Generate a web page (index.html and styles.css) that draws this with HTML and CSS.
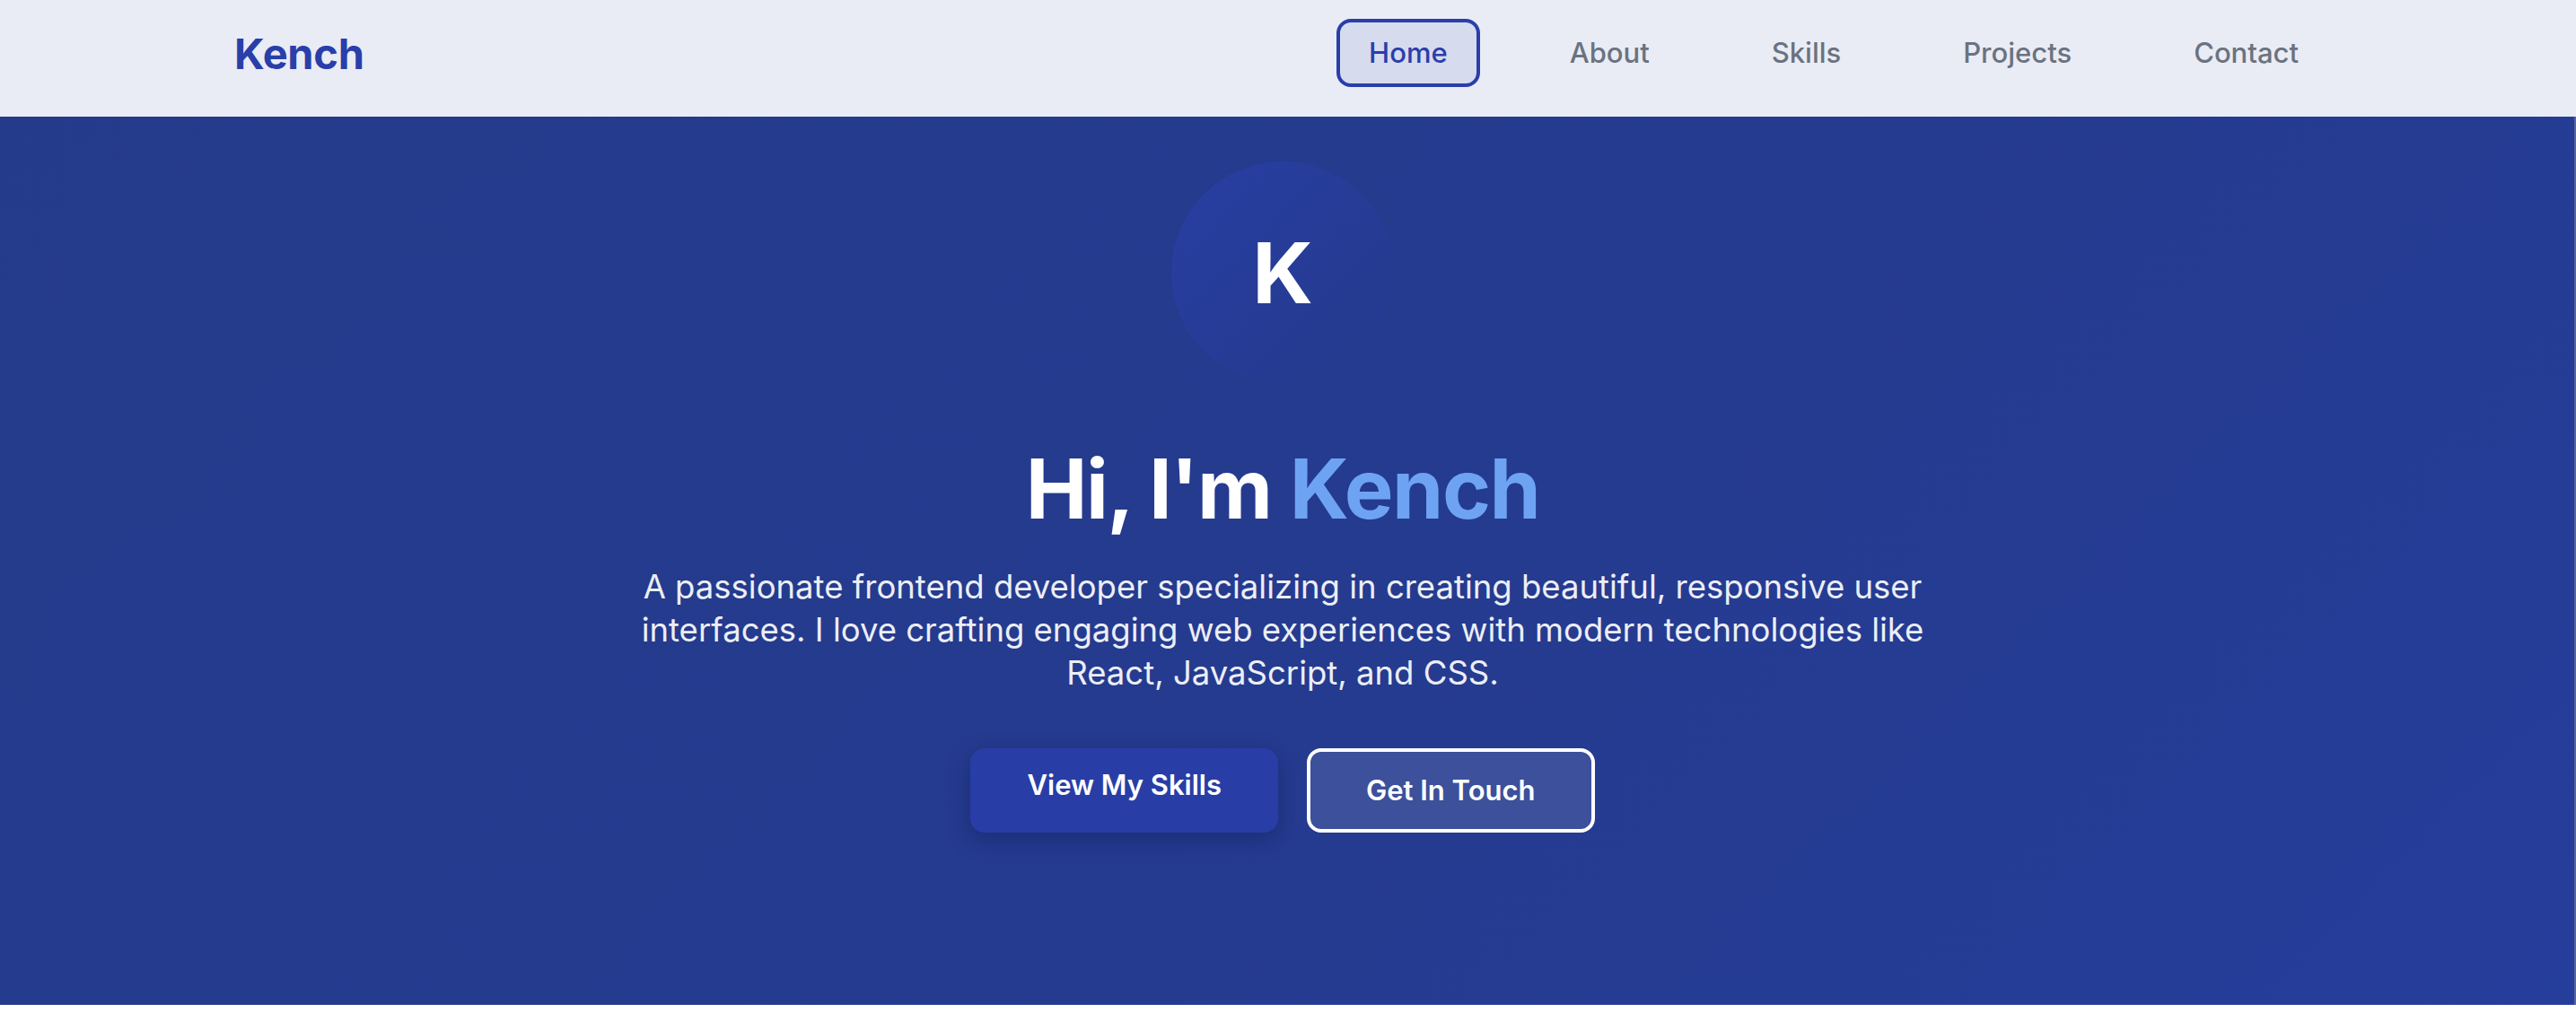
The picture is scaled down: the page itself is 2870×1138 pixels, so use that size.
FILE: index.html
```html
<!DOCTYPE html>
<html lang="en">
<head>
<meta charset="utf-8">
<title>Kench</title>
<link rel="stylesheet" href="styles.css">
</head>
<body>
  <header class="navbar">
    <div class="nav-inner">
      <a class="logo" href="#">Kench</a>
      <nav class="nav-links">
        <a class="nav-link active" href="#">Home</a>
        <a class="nav-link" href="#">About</a>
        <a class="nav-link" href="#">Skills</a>
        <a class="nav-link" href="#">Projects</a>
        <a class="nav-link" href="#">Contact</a>
      </nav>
    </div>
  </header>
  <section class="hero">
    <div class="hero-inner">
      <div class="avatar"><span>K</span></div>
      <h1 class="hero-title">Hi, I'm <span class="accent">Kench</span></h1>
      <p class="hero-text">A passionate frontend developer specializing in creating beautiful, responsive user interfaces. I love crafting engaging web experiences with modern technologies like React, JavaScript, and CSS.</p>
      <div class="hero-buttons">
        <a class="btn btn-primary" href="#">View My Skills</a>
        <a class="btn btn-outline" href="#">Get In Touch</a>
      </div>
    </div>
  </section>
</body>
</html>
```

FILE: styles.css
```css
* {
  box-sizing: border-box;
}

html, body {
  margin: 0;
  padding: 0;
  background: #ffffff;
}

body {
  font-family: Inter, "Noto Sans", "Liberation Sans", sans-serif;
  -webkit-font-smoothing: antialiased;
}

a {
  text-decoration: none;
}

.navbar {
  height: 130px;
  background: #e9ecf5;
  display: flex;
  align-items: center;
  padding-right: 12px;
  padding-bottom: 12px;
}

.nav-inner {
  width: 2336px;
  margin: 0 auto;
  display: flex;
  align-items: center;
  justify-content: space-between;
}

.logo {
  font-size: 47px;
  font-weight: 700;
  color: #2a3eaa;
  letter-spacing: -0.3px;
}

.nav-links {
  display: flex;
  align-items: center;
  gap: 64px;
}

.nav-link {
  font-size: 31px;
  font-weight: 500;
  color: #6b7280;
  padding: 16px 32px;
  line-height: 36px;
  border: 4px solid transparent;
  border-radius: 16px;
}

.nav-link.active {
  color: #2a3eaa;
  background: #d6dbee;
  border-color: #2a3eaa;
}

.hero {
  height: 990px;
  background: linear-gradient(135deg, #243a8a 0%, #253b8f 55%, #263e9b 100%);
  border-right: 2px solid #56639f;
  padding-right: 10px;
}

.hero-inner {
  padding-top: 50px;
  display: flex;
  flex-direction: column;
  align-items: center;
}

.avatar {
  width: 248px;
  height: 248px;
  border-radius: 50%;
  background: linear-gradient(135deg, #283fa3 0%, #263c98 45%, #243a8c 100%);
  display: flex;
  align-items: center;
  justify-content: center;
}

.avatar span {
  font-size: 94px;
  font-weight: 700;
  color: #ffffff;
  line-height: 1;
}

.hero-title {
  margin: 66px 0 0;
  font-size: 92px;
  line-height: 101px;
  font-weight: 700;
  color: #ffffff;
  letter-spacing: -1.5px;
}

.accent {
  color: #6ea3f3;
}

.hero-text {
  margin: 35px 0 0;
  max-width: 1470px;
  text-align: center;
  font-size: 36.5px;
  line-height: 48px;
  font-weight: 400;
  color: #eceef6;
}

.hero-buttons {
  margin-top: 60px;
  display: flex;
  gap: 32px;
}

.btn {
  display: block;
  height: 94px;
  font-size: 31px;
  font-weight: 600;
  line-height: 38px;
  color: #ffffff;
  border-radius: 16px;
}

.btn-primary {
  padding: 22px 63px 34px;
  background: #283ea6;
  box-shadow: 0 8px 24px rgba(10, 20, 70, 0.35);
}

.btn-outline {
  padding: 24px 62px;
  background: #3c509b;
  border: 4px solid #ffffff;
}
```
